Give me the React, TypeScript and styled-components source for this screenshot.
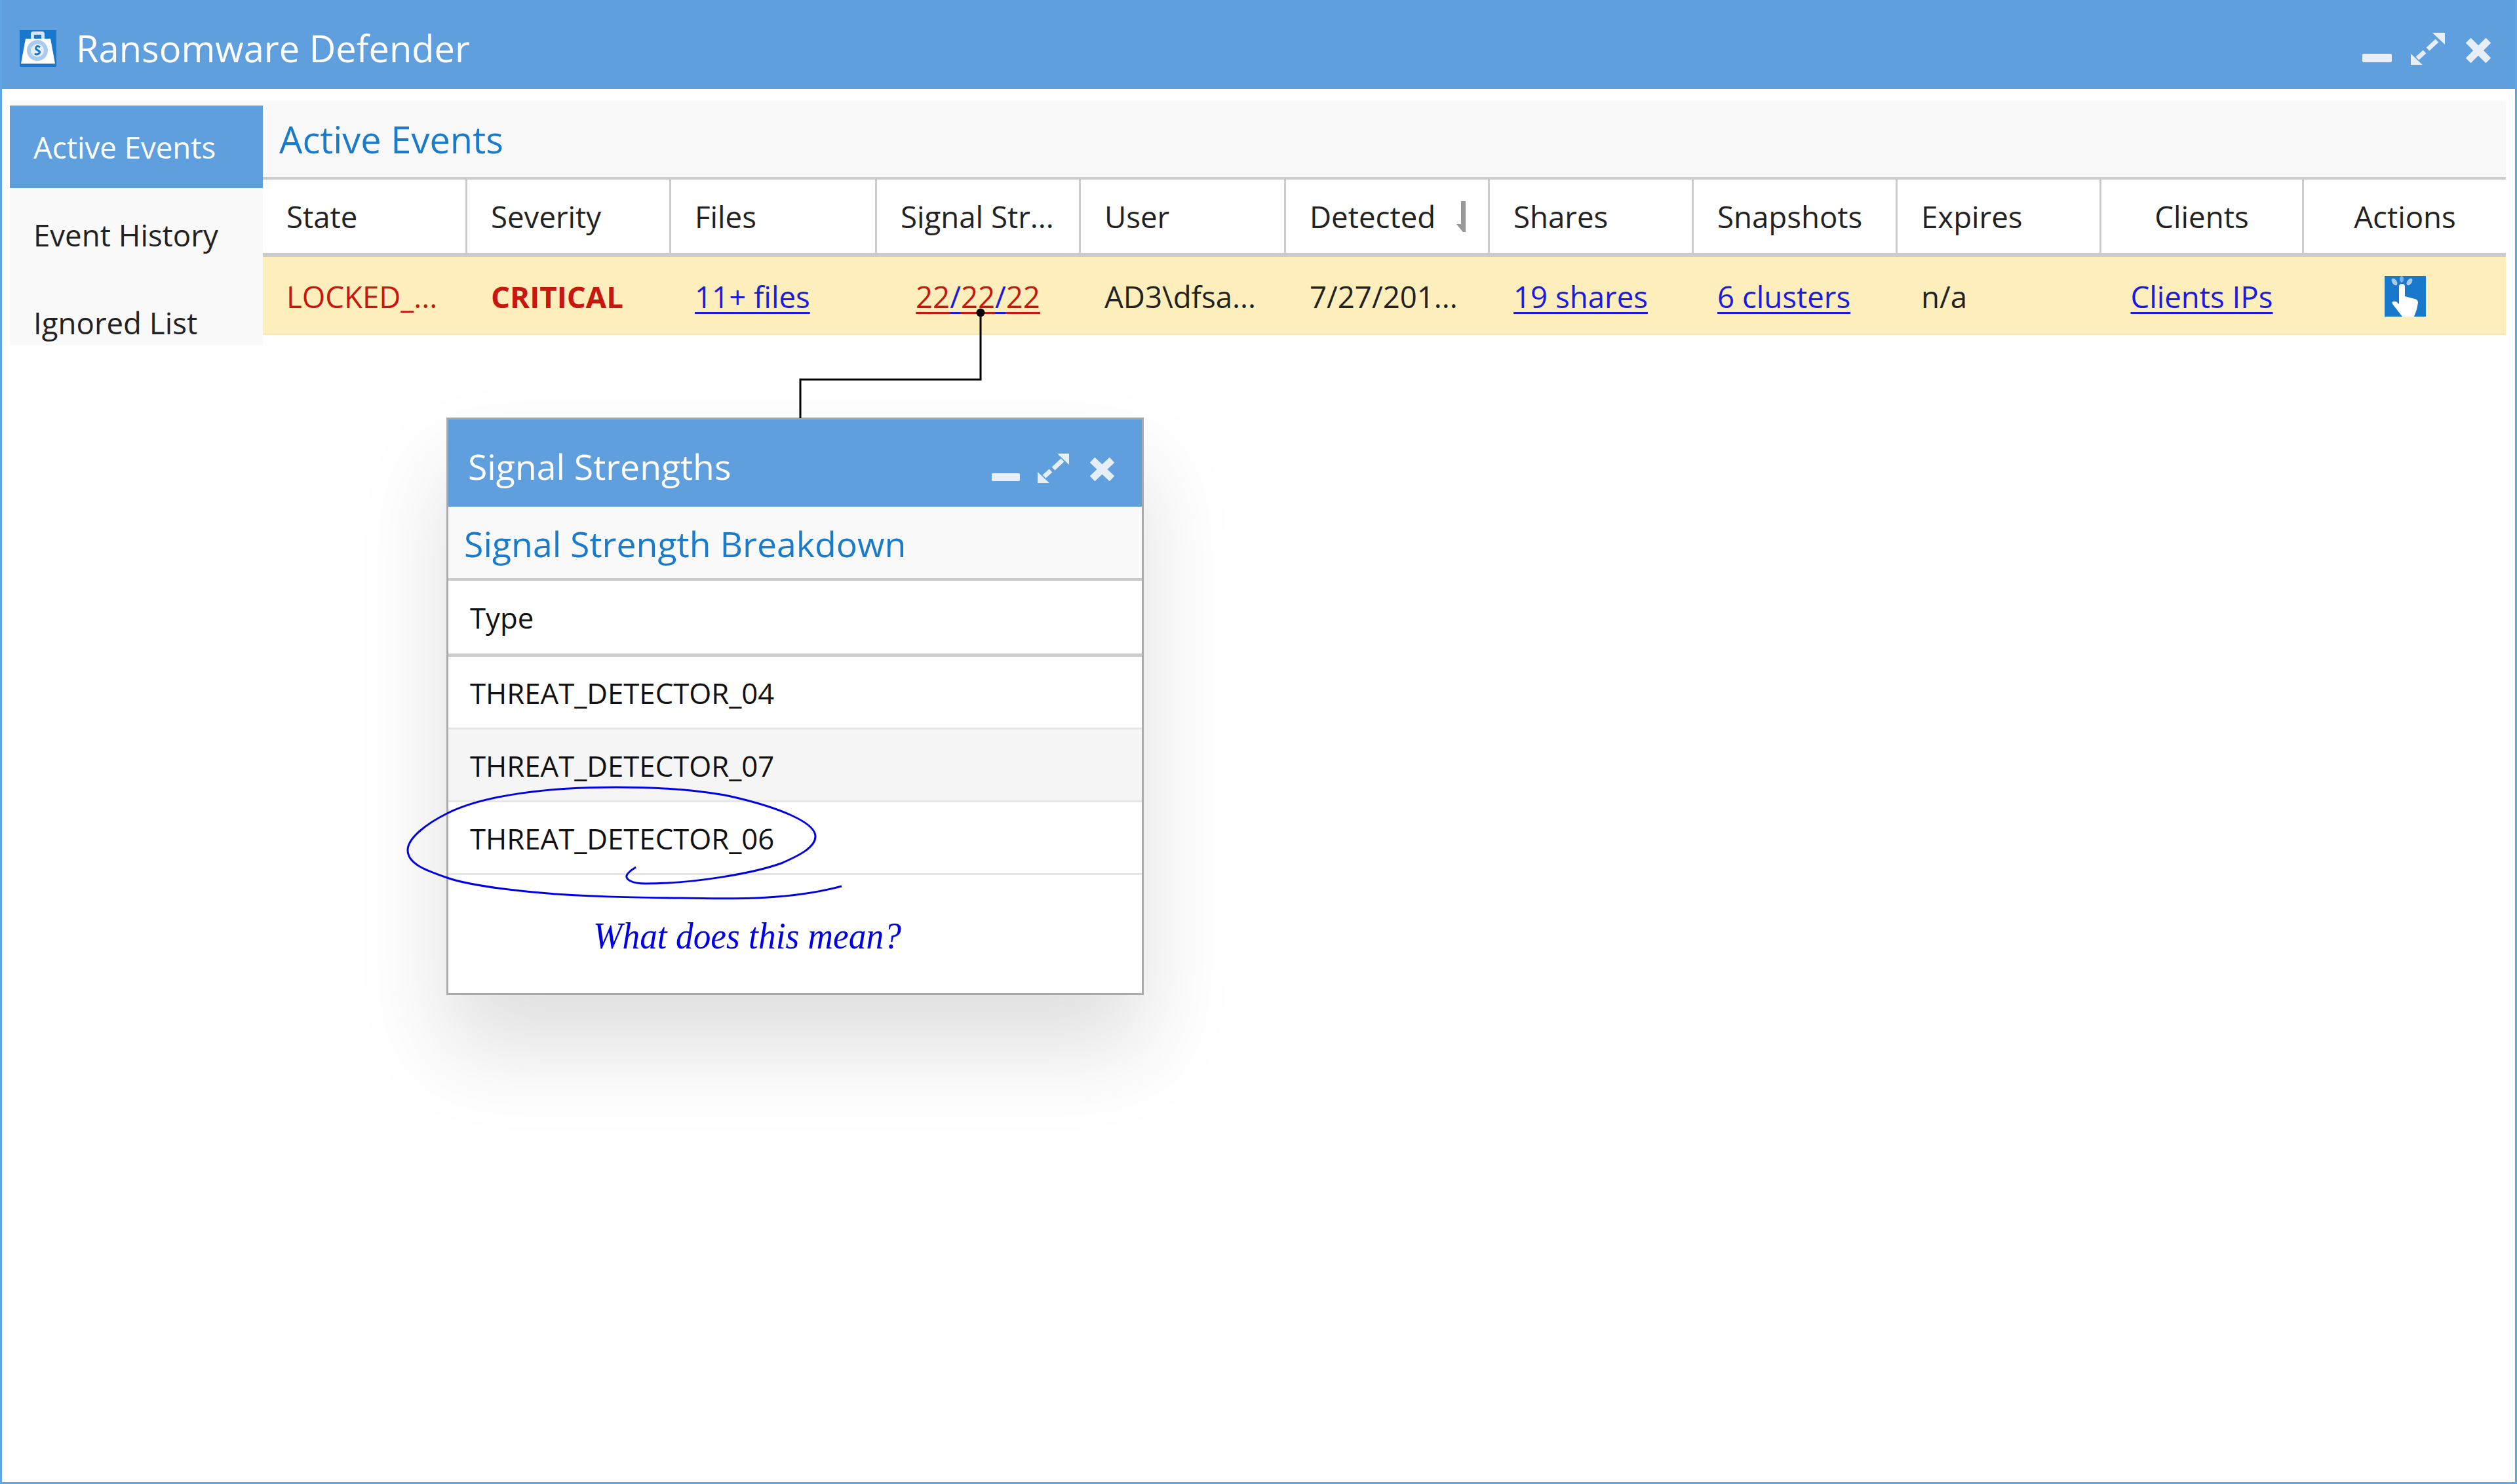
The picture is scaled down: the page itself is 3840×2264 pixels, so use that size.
import React from 'react';
import styled, { createGlobalStyle } from 'styled-components';

const BLUE = '#5f9fdd';

const GlobalStyle = createGlobalStyle`
  html, body {
    margin: 0;
    padding: 0;
    background: #fff;
  }
  * {
    box-sizing: border-box;
  }
`;

const Window = styled.div`
  position: relative;
  width: 3840px;
  height: 2264px;
  background: #fff;
  border: solid #62a6e6;
  border-width: 0 3px 3px 3px;
  font-family: 'Open Sans', 'Liberation Sans', sans-serif;
  font-size: 45.6px;
  color: #222;
  overflow: hidden;
`;

const TitleBar = styled.header`
  display: flex;
  align-items: center;
  height: 136px;
  margin: 0 -3px;
  padding: 0 40px 0 30px;
  background: ${BLUE};
  color: #fff;
`;

const Title = styled.div`
  flex: 1;
  margin-left: 30px;
  padding-top: 10px;
  font-size: 56px;
  line-height: 1;
`;

const Body = styled.div`
  display: flex;
  align-items: flex-start;
  padding: 18px 14px 0 12px;
`;

const SideBar = styled.nav`
  display: flex;
  flex-direction: column;
  width: 386px;
  height: 372px;
  padding-top: 7px;
  background: #f9f9f9;
  overflow: hidden;
`;

const SideItem = styled.div<{ $active?: boolean }>`
  display: flex;
  flex: none;
  align-items: center;
  height: 126px;
  margin-bottom: 8px;
  padding-left: 36px;
  background: ${(p) => (p.$active ? BLUE : 'transparent')};
  color: ${(p) => (p.$active ? '#fff' : '#222')};
`;

const Main = styled.section`
  flex: 1;
`;

const Heading = styled.div<{ $popup?: boolean }>`
  display: flex;
  align-items: center;
  background: #f9f9f9;
  color: #1a7bcb;
  font-size: ${(p) => (p.$popup ? '53.6px' : '56px')};
  height: ${(p) => (p.$popup ? '113px' : '120px')};
  padding-left: ${(p) => (p.$popup ? '24px' : '25px')};
  padding-top: ${(p) => (p.$popup ? '4px' : '0')};
  border-bottom: 4px solid #ccc;
`;

const Columns = styled.div`
  display: grid;
  grid-template-columns: 309px 311px 314px 311px 313px 311px 311px 311px 311px 309px 311px;
`;

const HeadRow = styled(Columns)`
  height: 118px;
  border-bottom: 6px solid #ccc;
`;

const HeadCell = styled.div<{ $center?: boolean }>`
  display: flex;
  align-items: center;
  justify-content: ${(p) => (p.$center ? 'center' : 'flex-start')};
  padding-left: ${(p) => (p.$center ? '0' : '36px')};
  white-space: nowrap;
  border-left: 3px solid #ccc;
  &:first-child {
    border-left: 0;
  }
`;

const SortArrow = styled.svg`
  margin-left: 32px;
  width: 14px;
  height: 47px;
`;

const DataRow = styled(Columns)`
  height: 119px;
  background: #fdeebb;
  border-bottom: 2px solid #f4e6ba;
`;

const Cell = styled(HeadCell)`
  padding-top: 2px;
  border-left-color: transparent;
`;

const Locked = styled.span`
  color: #c8170f;
`;

const Critical = styled.span`
  color: #c8170f;
  font-weight: 700;
`;

const RowLink = styled.a<{ $red?: boolean }>`
  color: ${(p) => (p.$red ? '#c8170f' : '#1a1ae6')};
  text-decoration: underline;
  text-decoration-thickness: 3px;
  text-underline-offset: 6px;
`;

const IconSvg = styled.svg<{ $drop?: number }>`
  display: block;
  flex: none;
  margin-top: ${(p) => p.$drop || 0}px;
`;

const Popup = styled.div`
  position: absolute;
  left: 678px;
  top: 637px;
  width: 1064px;
  height: 881px;
  background: #fff;
  border: 3px solid #aaa;
  box-shadow: 0 80px 130px rgba(0, 0, 0, 0.13);
`;

const PopupBar = styled.div`
  display: flex;
  align-items: center;
  height: 133px;
  padding: 0 42px 0 30px;
  background: ${BLUE};
  color: #fff;
  font-size: 53.5px;
`;

const PopupTitle = styled.div`
  flex: 1;
  padding-top: 10px;
`;

const TypeHead = styled.div`
  display: flex;
  align-items: center;
  height: 116px;
  padding-left: 33px;
  border-bottom: 5px solid #ccc;
  font-size: 43.7px;
  color: #111;
`;

const TypeRow = styled.div<{ $alt?: boolean }>`
  display: flex;
  align-items: center;
  height: 111px;
  padding: 2px 0 0 33px;
  background: ${(p) => (p.$alt ? '#f5f5f5' : '#fff')};
  border-bottom: 3px solid #e6e6e6;
  font-size: 43.7px;
  color: #111;
`;

const Overlay = styled.svg`
  position: absolute;
  left: -3px;
  top: 0;
  width: 3840px;
  height: 2264px;
  pointer-events: none;
`;

const Note = styled.div`
  position: absolute;
  left: 902px;
  top: 1394px;
  font-family: 'Liberation Serif', serif;
  font-style: italic;
  font-size: 58px;
  line-height: 68px;
  color: #0000e6;
  white-space: nowrap;
  transform: scaleX(0.92);
  transform-origin: left center;
`;

const BagLogo = () => (
  <IconSvg width="56" height="56" viewBox="0 0 56 56" $drop={12}>
    <rect width="56" height="56" fill="#1878cc" />
    <path d="M17 14V6q0-4 4-4h13q4 0 4 4v8h-5V7H22v7z" fill="#d5e5f7" />
    <path d="M9 13h38l7 38H2z" fill="#fff" />
    <circle cx="27" cy="31" r="16" fill="#a9cbed" />
    <circle cx="27" cy="31" r="10" fill="#e4eefa" />
    <path d="M31 26q-4-3-6 0t3 5 1 5q-3 2-6 0" fill="none" stroke="#1878cc" strokeWidth="3" />
  </IconSvg>
);

const TouchIcon = () => (
  <IconSvg width="63" height="62" viewBox="0 0 63 62">
    <rect width="63" height="62" fill="#1878cc" />
    <path
      d="M22 16q0-4 4.500-4t4.500 4v15l15 4q5 1 5 6l-2 10-4 11H27L13 44q-3-4 0-5 3-1 6 1l3 3z"
      fill="#fff"
    />
    <ellipse cx="15" cy="9" rx="3.500" ry="6" transform="rotate(-35 15 9)" fill="#a9cbed" />
    <ellipse cx="26" cy="5" rx="3" ry="5" fill="#7fb2e4" />
    <ellipse cx="38" cy="9" rx="3.500" ry="6" transform="rotate(35 38 9)" fill="#a9cbed" />
  </IconSvg>
);

const WindowControls = ({ small }: { small?: boolean }) =>
  small ? (
    <IconSvg width="187" height="45" viewBox="0 0 187 45" $drop={16}>
      <rect x="0" y="30" width="43" height="12" rx="2" fill="#e6eef8" />
      <path d="M100 0h18v17zM70 45V28l18 17z" fill="#e6eef8" />
      <path d="M108 10L94 23M80 35L90 26" stroke="#e6eef8" strokeWidth="7" />
      <path d="M157.500 13.500L179.500 34.500M179.500 13.500L157.500 34.500" stroke="#e6eef8" strokeWidth="11" strokeLinecap="square" />
    </IconSvg>
  ) : (
    <IconSvg width="196" height="49" viewBox="0 0 196 49" $drop={13}>
      <rect x="0" y="32" width="45" height="13" rx="2" fill="#e6eef8" />
      <path d="M107 0h19v18zM74 49V32l18 17z" fill="#e6eef8" />
      <path d="M114 12L100 25M84 39L95 29" stroke="#e6eef8" strokeWidth="7" />
      <path d="M165.500 15.500L188.500 38.500M188.500 15.500L165.500 38.500" stroke="#e6eef8" strokeWidth="11" strokeLinecap="square" />
    </IconSvg>
  );

const App: React.FC = () => {
  return (
    <>
      <GlobalStyle />
      <Window>
        <TitleBar>
          <BagLogo />
          <Title>Ransomware Defender</Title>
          <WindowControls />
        </TitleBar>
        <Body>
          <SideBar>
            <SideItem $active>Active Events</SideItem>
            <SideItem>Event History</SideItem>
            <SideItem>Ignored List</SideItem>
          </SideBar>
          <Main>
            <Heading>Active Events</Heading>
            <HeadRow>
              <HeadCell>State</HeadCell>
              <HeadCell>Severity</HeadCell>
              <HeadCell>Files</HeadCell>
              <HeadCell>Signal Str...</HeadCell>
              <HeadCell>User</HeadCell>
              <HeadCell>
                Detected
                <SortArrow viewBox="0 0 14 47">
                  <path d="M7 0h7v47h-4L0 35h7z" fill="#999" />
                </SortArrow>
              </HeadCell>
              <HeadCell>Shares</HeadCell>
              <HeadCell>Snapshots</HeadCell>
              <HeadCell>Expires</HeadCell>
              <HeadCell $center>Clients</HeadCell>
              <HeadCell $center>Actions</HeadCell>
            </HeadRow>
            <DataRow>
              <Cell>
                <Locked>LOCKED_...</Locked>
              </Cell>
              <Cell>
                <Critical>CRITICAL</Critical>
              </Cell>
              <Cell>
                <RowLink>11+ files</RowLink>
              </Cell>
              <Cell $center>
                <RowLink $red>22</RowLink>
                <RowLink>/</RowLink>
                <RowLink $red>22</RowLink>
                <RowLink>/</RowLink>
                <RowLink $red>22</RowLink>
              </Cell>
              <Cell>AD3\dfsa...</Cell>
              <Cell>7/27/201...</Cell>
              <Cell>
                <RowLink>19 shares</RowLink>
              </Cell>
              <Cell>
                <RowLink>6 clusters</RowLink>
              </Cell>
              <Cell>n/a</Cell>
              <Cell $center>
                <RowLink>Clients IPs</RowLink>
              </Cell>
              <Cell $center>
                <TouchIcon />
              </Cell>
            </DataRow>
          </Main>
        </Body>
        <Popup>
          <PopupBar>
            <PopupTitle>Signal Strengths</PopupTitle>
            <WindowControls small />
          </PopupBar>
          <Heading $popup>Signal Strength Breakdown</Heading>
          <TypeHead>Type</TypeHead>
          <TypeRow>THREAT_DETECTOR_04</TypeRow>
          <TypeRow $alt>THREAT_DETECTOR_07</TypeRow>
          <TypeRow>THREAT_DETECTOR_06</TypeRow>
        </Popup>
        <Overlay viewBox="0 0 3840 2264">
          <path d="M1496 477V579H1221V638" fill="none" stroke="#000" strokeWidth="3" />
          <circle cx="1496" cy="477" r="6.500" fill="#000" />
          <path
            d="M1284 1352C1210 1372 1130 1372 1039 1370C960 1369 890 1368 825 1362C770 1357 710 1349 682 1339C650 1328 622 1318 622 1297C622 1278 652 1256 682 1241C740 1212 840 1201 940 1201C1010 1201 1070 1206 1115 1215C1190 1232 1244 1255 1244 1276C1244 1292 1222 1304 1192 1317C1150 1332 1060 1348 985 1348C960 1348 955 1340 956 1336C957 1332 962 1328 970 1323"
            fill="none"
            stroke="#0000e6"
            strokeWidth="3"
          />
        </Overlay>
        <Note>What does this mean?</Note>
      </Window>
    </>
  );
};

export default App;
